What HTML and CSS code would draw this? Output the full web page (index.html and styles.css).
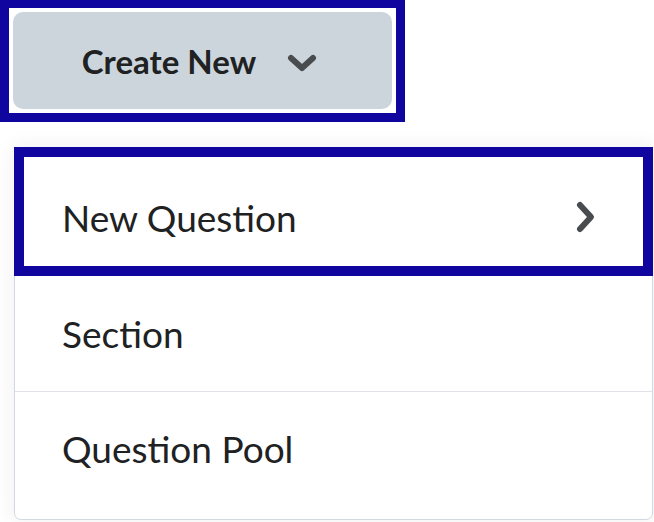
FILE: index.html
```html
<!DOCTYPE html>
<html lang="en">
<head>
    <meta charset="UTF-8">
    <meta name="viewport" content="width=device-width, initial-scale=1.0">
    <title>Create New</title>
    <link rel="stylesheet" href="styles.css">
</head>
<body>
    <div class="focus-box">
        <button class="create-btn" type="button">
            <span class="create-label">Create New</span>
            <svg class="chevron-down" width="32" height="18" viewBox="0 0 32 18" aria-hidden="true">
                <path d="M5 4 L16 14 L27 4" />
            </svg>
        </button>
    </div>

    <ul class="menu">
        <li class="menu-item menu-item-focus">
            <span>New Question</span>
            <svg class="chevron-right" width="24" height="34" viewBox="0 0 24 34" aria-hidden="true">
                <path d="M7 5 L18 17 L7 29" />
            </svg>
        </li>
        <li class="menu-item">Section</li>
        <li class="menu-item menu-item-last">Question Pool</li>
    </ul>
</body>
</html>
```

FILE: styles.css
```css
* {
    margin: 0;
    padding: 0;
    box-sizing: border-box;
    font-family: Lato, 'Open Sans', sans-serif;
}

body {
    background-color: #ffffff;
    color: #202122;
    width: 654px;
    height: 522px;
    overflow: hidden;
}

.focus-box {
    width: 405px;
    height: 122px;
    border: 9px solid #10069f;
    border-top-width: 8px;
    padding: 4px;
    background-color: #ffffff;
}

.create-btn {
    width: 100%;
    height: 100%;
    border: none;
    border-radius: 10px;
    background-color: #cdd5dc;
    display: flex;
    align-items: center;
    justify-content: center;
    gap: 30px;
    padding-right: 5px;
}

.create-label {
    font-size: 33px;
    font-weight: 700;
    color: #202122;
}

.chevron-down path,
.chevron-right path {
    fill: none;
    stroke: #494c4f;
    stroke-width: 6;
    stroke-linecap: round;
    stroke-linejoin: round;
}

.chevron-down {
    margin-top: 4px;
}

.menu {
    list-style: none;
    margin: 25px 0 0 14px;
    width: 639px;
    height: 373px;
    border: 1px solid #d3d9e3;
    border-radius: 7px;
    background-color: #ffffff;
    box-shadow: 0 0 18px 4px rgba(0, 0, 0, 0.05);
}

.menu-item {
    font-size: 37px;
    line-height: 40px;
    padding: 38px 0 37px 47px;
    border-bottom: 1px solid #dfe3e9;
    color: #202122;
}

.menu-item-focus {
    margin: -1px -1px 0 -1px;
    height: 129px;
    border: 10px solid #10069f;
    padding: 41px 46px 0 38px;
    display: flex;
    justify-content: space-between;
    align-items: flex-start;
}

.menu-item-focus .chevron-right {
    margin-top: 2px;
}

.menu-item-last {
    border-bottom: none;
    padding-top: 37px;
}
```
